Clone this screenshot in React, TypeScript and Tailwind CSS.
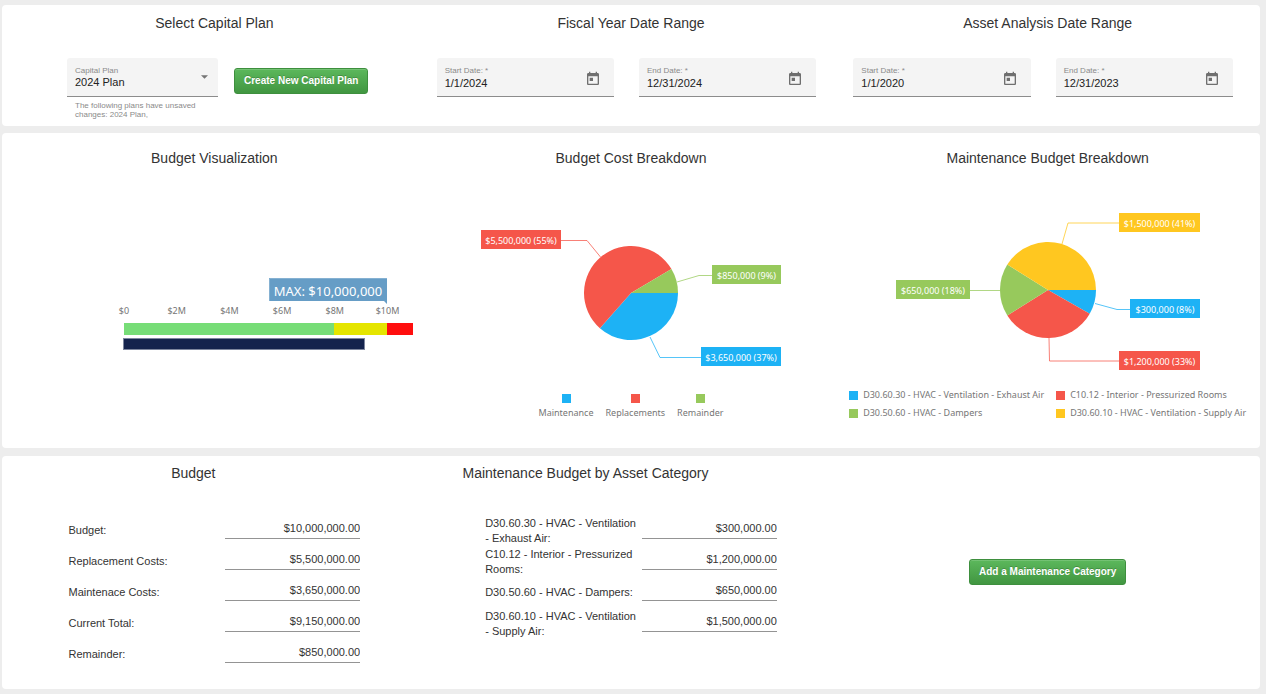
import { useState } from "react";
import type { ReactNode } from "react";

type Slice = {
  name: string;
  value: number;
  label: string;
  color: string;
  // callout box and the line that ties it to the slice
  box: { x: number; y: number; w: number };
  line: string;
};

const costSlices: Slice[] = [
  {
    name: "Maintenance",
    value: 3650000,
    label: "$3,650,000 (37%)",
    color: "#1db2f5",
    box: { x: 278, y: 172, w: 80 },
    line: "278,182.5 237,182.5 227,162",
  },
  {
    name: "Replacements",
    value: 5500000,
    label: "$5,500,000 (55%)",
    color: "#f5564a",
    box: { x: 58, y: 55, w: 80 },
    line: "138,65.5 164,65.5 177.5,82",
  },
  {
    name: "Remainder",
    value: 850000,
    label: "$850,000 (9%)",
    color: "#97c95c",
    box: { x: 289, y: 90, w: 69 },
    line: "289,100.5 276,100.5 254,107",
  },
];

const maintenanceSlices: Slice[] = [
  {
    name: "D30.60.30 - HVAC - Ventilation - Exhaust Air",
    value: 300000,
    label: "$300,000 (8%)",
    color: "#1db2f5",
    box: { x: 290, y: 124, w: 70 },
    line: "290,134.5 277,134.5 255,128.5",
  },
  {
    name: "C10.12 - Interior - Pressurized Rooms",
    value: 1200000,
    label: "$1,200,000 (33%)",
    color: "#f5564a",
    box: { x: 279, y: 176, w: 81 },
    line: "279,186 209.5,186 209,163",
  },
  {
    name: "D30.50.60 - HVAC - Dampers",
    value: 650000,
    label: "$650,000 (18%)",
    color: "#97c95c",
    box: { x: 56, y: 105, w: 74 },
    line: "130,115.5 160,115.5",
  },
  {
    name: "D30.60.10 - HVAC - Ventilation - Supply Air",
    value: 1500000,
    label: "$1,500,000 (41%)",
    color: "#ffc720",
    box: { x: 279, y: 38, w: 81 },
    line: "279,48 228,48 222,69",
  },
];

const budgetRows = [
  { label: "Budget:", value: "$10,000,000.00" },
  { label: "Replacement Costs:", value: "$5,500,000.00" },
  { label: "Maintenace Costs:", value: "$3,650,000.00" },
  { label: "Current Total:", value: "$9,150,000.00" },
  { label: "Remainder:", value: "$850,000.00" },
];

const categoryRows = [
  { label: "D30.60.30 - HVAC - Ventilation - Exhaust Air:", value: "$300,000.00" },
  { label: "C10.12 - Interior - Pressurized Rooms:", value: "$1,200,000.00" },
  { label: "D30.50.60 - HVAC - Dampers:", value: "$650,000.00" },
  { label: "D30.60.10 - HVAC - Ventilation - Supply Air:", value: "$1,500,000.00" },
];

const Title = ({ children, className = "" }: { children: ReactNode; className?: string }) => (
  <h2 className={`text-center text-sm leading-5 text-[#333333] ${className}`}>{children}</h2>
);

const GreenButton = ({ children }: { children: ReactNode }) => (
  <button
    type="button"
    className="h-[26px] px-[9px] rounded-[3px] border border-[#3e8f3e] bg-linear-to-b from-[#5cb85c] to-[#419641] text-[10px] font-bold text-white whitespace-nowrap inset-shadow-[0_1px_0_rgba(255,255,255,0.15)] text-shadow-[0_-1px_0_rgba(0,0,0,0.2)]">
    {children}
  </button>
);

const DateField = ({ id, label, initial }: { id: string; label: string; initial: string }) => {
  const [value, setValue] = useState(initial);

  return (
    <div className="flex-1 min-w-0 flex items-start justify-between rounded-t-[3px] border-b border-[#8c8c8c] bg-[#f4f4f4] pl-2 pr-[13px] pt-2 pb-[5px]">
      <div className="flex-1 min-w-0">
        <label htmlFor={id} className="block pb-px text-[8px] leading-[9px] text-[#8a8a8a]">
          {label}
        </label>
        <input
          id={id}
          type="text"
          value={value}
          onChange={(e) => setValue(e.target.value)}
          className="block w-full h-[15px] text-[11px] leading-[15px] text-[#222222] outline-none"
        />
      </div>
      <button type="button" aria-label="Open calendar" className="mt-[5px] text-[#6f6f6f]">
        <svg className="w-4 h-4" viewBox="0 0 24 24" fill="currentColor">
          <path d="M19 3h-1V1h-2v2H8V1H6v2H5c-1.11 0-1.99.9-1.99 2L3 19c0 1.1.89 2 2 2h14c1.1 0 2-.9 2-2V5c0-1.1-.9-2-2-2zm0 16H5V8h14v11zM7 10h5v5H7z" />
        </svg>
      </button>
    </div>
  );
};

const MoneyRow = ({ id, label, value }: { id: string; label: string; value: string }) => (
  <div className="flex h-[31px] items-center justify-between">
    <label htmlFor={id} className="w-[155px] text-[11px] leading-[15px] text-[#333333]">
      {label}
    </label>
    <input
      id={id}
      type="text"
      readOnly
      value={value}
      className="w-[135px] h-[19px] mb-[2px] pb-[3px] border-b border-[#949494] text-right text-[11px] leading-[15px] text-[#333333] outline-none"
    />
  </div>
);

const Pie = ({ slices, cx, cy, r }: { slices: Slice[]; cx: number; cy: number; r: number }) => {
  const total = slices.reduce((sum, s) => sum + s.value, 0);
  let angle = 0;

  return (
    <svg
      className="mx-auto mt-[7px] w-[416px] max-w-full"
      viewBox="0 0 416 210"
      fontFamily="'Noto Sans', sans-serif">
      {slices.map((s) => {
        const start = angle;
        const end = angle + (s.value / total) * Math.PI * 2;
        angle = end;
        const x1 = cx + r * Math.cos(start);
        const y1 = cy + r * Math.sin(start);
        const x2 = cx + r * Math.cos(end);
        const y2 = cy + r * Math.sin(end);
        const large = end - start > Math.PI ? 1 : 0;

        return (
          <g key={s.name}>
            <path d={`M${cx} ${cy}L${x1} ${y1}A${r} ${r} 0 ${large} 1 ${x2} ${y2}Z`} fill={s.color} />
            <polyline points={s.line} fill="none" stroke={s.color} strokeOpacity="0.75" />
            <rect x={s.box.x} y={s.box.y} width={s.box.w} height="19" fill={s.color} />
            <text
              x={s.box.x + s.box.w / 2}
              y={s.box.y + 14}
              fontSize="9"
              fill="#ffffff"
              textAnchor="middle">
              {s.label}
            </text>
          </g>
        );
      })}
    </svg>
  );
};

const BudgetBars = () => {
  // $1M is 26.35 units wide, zero sits at 118
  const ticks = [0, 2, 4, 6, 8, 10];

  return (
    <svg
      className="mx-auto mt-[7px] w-[416px] max-w-full"
      viewBox="0 0 416 210"
      fontFamily="'Noto Sans', sans-serif">
      <path d="M263 103H381V129L378 126H263Z" fill="#669dc6" />
      <path d="M263.5 126V103.5H381" fill="none" stroke="#85b1d2" />
      <text x="322" y="121" fontSize="13" fill="#ffffff" textAnchor="middle">
        MAX: $10,000,000
      </text>
      {ticks.map((t) => (
        <text key={t} x={118 + t * 26.35} y="139" fontSize="9" fill="#767676" textAnchor="middle">
          {t === 0 ? "$0" : `$${t}M`}
        </text>
      ))}
      <rect x="118" y="148" width="210" height="12" fill="#77dd77" />
      <rect x="328" y="148" width="53" height="12" fill="#e5e500" />
      <rect x="381" y="148" width="26" height="12" fill="#ff0e0e" />
      <rect x="117.5" y="163.5" width="241" height="11" fill="#14234d" stroke="#7d869e" />
    </svg>
  );
};

const App = () => {
  const [plan, setPlan] = useState("2024 Plan");

  return (
    <main className="min-h-screen bg-[#ededed] pt-[5px] pb-[5px] pl-[2px] pr-[6px] flex flex-col gap-[7px] font-['Liberation_Sans',Arial,sans-serif]">
      <section className="grid grid-cols-3 rounded-[4px] bg-white px-1 pt-2 pb-[7px]">
        <div>
          <Title>Select Capital Plan</Title>
          <div className="mt-[25px] pl-[61px] flex items-start gap-4">
            <div className="w-[151px]">
              <div className="relative rounded-t-[3px] border-b border-[#8c8c8c] bg-[#f4f4f4] px-2 pt-2 pb-[6px]">
                <label htmlFor="plan" className="block text-[8px] leading-[9px] text-[#8a8a8a]">
                  Capital Plan
                </label>
                <select
                  id="plan"
                  value={plan}
                  onChange={(e) => setPlan(e.target.value)}
                  className="block w-full h-[15px] appearance-none text-[11px] leading-[15px] text-[#222222] outline-none">
                  <option>2024 Plan</option>
                </select>
                <svg
                  className="pointer-events-none absolute right-[10px] top-[17px] w-[7px] h-[4px]"
                  viewBox="0 0 10 5"
                  fill="#757575">
                  <path d="M0 0l5 5 5-5z" />
                </svg>
              </div>
              <p className="mt-1 px-2 text-[8px] leading-[9px] text-[#8a8a8a]">
                The following plans have unsaved changes: 2024 Plan,
              </p>
            </div>
            <div className="pt-[9px]">
              <GreenButton>Create New Capital Plan</GreenButton>
            </div>
          </div>
        </div>
        <div>
          <Title>Fiscal Year Date Range</Title>
          <div className="mt-[25px] pl-[14px] pr-[23px] flex gap-[25px]">
            <DateField id="fiscal-start" label="Start Date: *" initial="1/1/2024" />
            <DateField id="fiscal-end" label="End Date: *" initial="12/31/2024" />
          </div>
        </div>
        <div>
          <Title>Asset Analysis Date Range</Title>
          <div className="mt-[25px] pl-[14px] pr-[23px] flex gap-[25px]">
            <DateField id="asset-start" label="Start Date: *" initial="1/1/2020" />
            <DateField id="asset-end" label="End Date: *" initial="12/31/2023" />
          </div>
        </div>
      </section>

      <section className="grid grid-cols-3 rounded-[4px] bg-white px-1 pt-[15px] pb-7">
        <div>
          <Title>Budget Visualization</Title>
          <BudgetBars />
        </div>
        <div>
          <Title>Budget Cost Breakdown</Title>
          <Pie slices={costSlices} cx={208} cy={118} r={47} />
          <ul className="mt-[9px] flex justify-center gap-3 font-['Noto_Sans',sans-serif] text-[9px] leading-[14px] text-[#767676]">
            {costSlices.map((s) => (
              <li key={s.name} className="flex flex-col items-center gap-[3px]">
                <span className="w-[9px] h-[9px]" style={{ backgroundColor: s.color }} />
                {s.name}
              </li>
            ))}
          </ul>
        </div>
        <div>
          <Title>Maintenance Budget Breakdown</Title>
          <Pie slices={maintenanceSlices} cx={208} cy={115} r={48} />
          <ul className="mt-[3px] grid grid-cols-[auto_auto] justify-center gap-x-3 gap-y-1 font-['Noto_Sans',sans-serif] text-[9px] leading-[14px] text-[#767676]">
            {maintenanceSlices.map((s) => (
              <li key={s.name} className="flex items-center gap-[5px] whitespace-nowrap">
                <span className="w-[9px] h-[9px]" style={{ backgroundColor: s.color }} />
                {s.name}
              </li>
            ))}
          </ul>
        </div>
      </section>

      <section className="mt-px grid grid-cols-3 rounded-[4px] bg-white px-1 pt-[7px] pb-[19px]">
        <div>
          <Title className="pr-[42px]">Budget</Title>
          <div className="mt-8 mx-auto w-[70%]">
            {budgetRows.map((row, i) => (
              <MoneyRow key={row.label} id={`budget-${i}`} {...row} />
            ))}
          </div>
        </div>
        <div>
          <Title className="pr-[91px]">Maintenance Budget by Asset Category</Title>
          <div className="mt-8 mx-auto w-[70%]">
            {categoryRows.map((row, i) => (
              <MoneyRow key={row.label} id={`category-${i}`} {...row} />
            ))}
          </div>
        </div>
        <div className="flex items-center justify-center pt-[10px]">
          <GreenButton>Add a Maintenance Category</GreenButton>
        </div>
      </section>
    </main>
  );
};

export default App;
